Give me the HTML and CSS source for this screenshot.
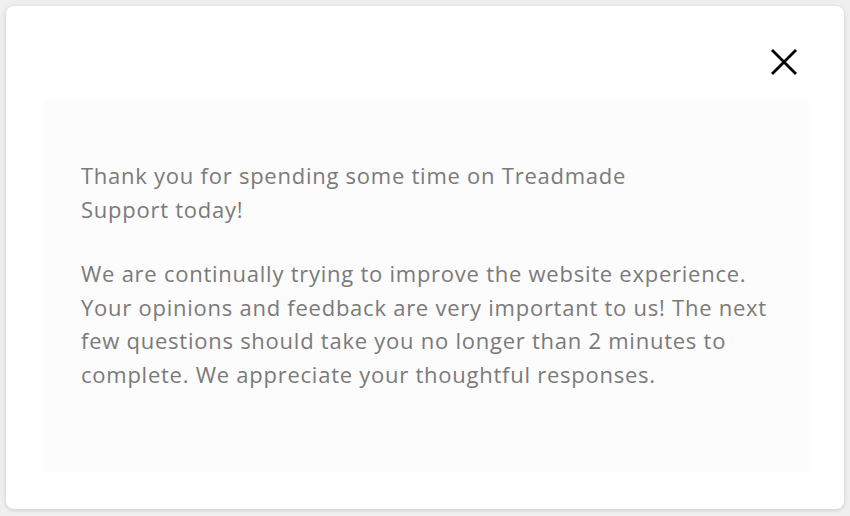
FILE: index.html
```html
<!DOCTYPE html>
<html lang="en">
<head>
    <meta charset="UTF-8">
    <meta name="viewport" content="width=device-width, initial-scale=1.0">
    <title>Survey Intro</title>
    <link rel="stylesheet" href="styles.css">
</head>
<body>

<div class="modal">
    <div class="modal-header">
        <button class="close-btn" aria-label="Close">
            <svg width="28" height="28" viewBox="0 0 28 28">
                <path d="M3 3 L25 25 M25 3 L3 25" stroke="#000" stroke-width="2.8" stroke-linecap="square" fill="none"/>
            </svg>
        </button>
    </div>
    <div class="modal-body">
        <p>Thank you for spending some time on Treadmade<br>Support today!</p>
        <p>We are continually trying to improve the website experience.<br>
        Your opinions and feedback are very important to us! The next<br>
        few questions should take you no longer than 2 minutes to<br>
        complete. We appreciate your thoughtful responses.</p>
    </div>
</div>

</body>
</html>
```

FILE: styles.css
```css
      body {
          margin: 0;
          padding: 6px;
          background-color: #efefef;
          font-family: "Open Sans", Arial, sans-serif;
      }

      .modal {
          background-color: #fff;
          width: 838px;
          height: 503px;
          border-radius: 8px;
          box-shadow: 0 1px 4px rgba(0, 0, 0, 0.15);
          box-sizing: border-box;
          padding: 0 35px 37px 37px;
          display: flex;
          flex-direction: column;
      }

      .modal-header {
          height: 94px;
          display: flex;
          justify-content: flex-end;
      }

      .close-btn {
          background: none;
          border: none;
          padding: 0;
          margin: 42px 11px 0 0;
          width: 28px;
          height: 28px;
          cursor: pointer;
      }

      .modal-body {
          flex: 1;
          background-color: #fcfcfc;
          padding: 59px 38px 0 38px;
      }

      .modal-body p {
          margin: 0 0 31px 0;
          font-size: 22px;
          letter-spacing: 0.75px;
          line-height: 33.5px;
          color: #7a7a7a;
      }
```
